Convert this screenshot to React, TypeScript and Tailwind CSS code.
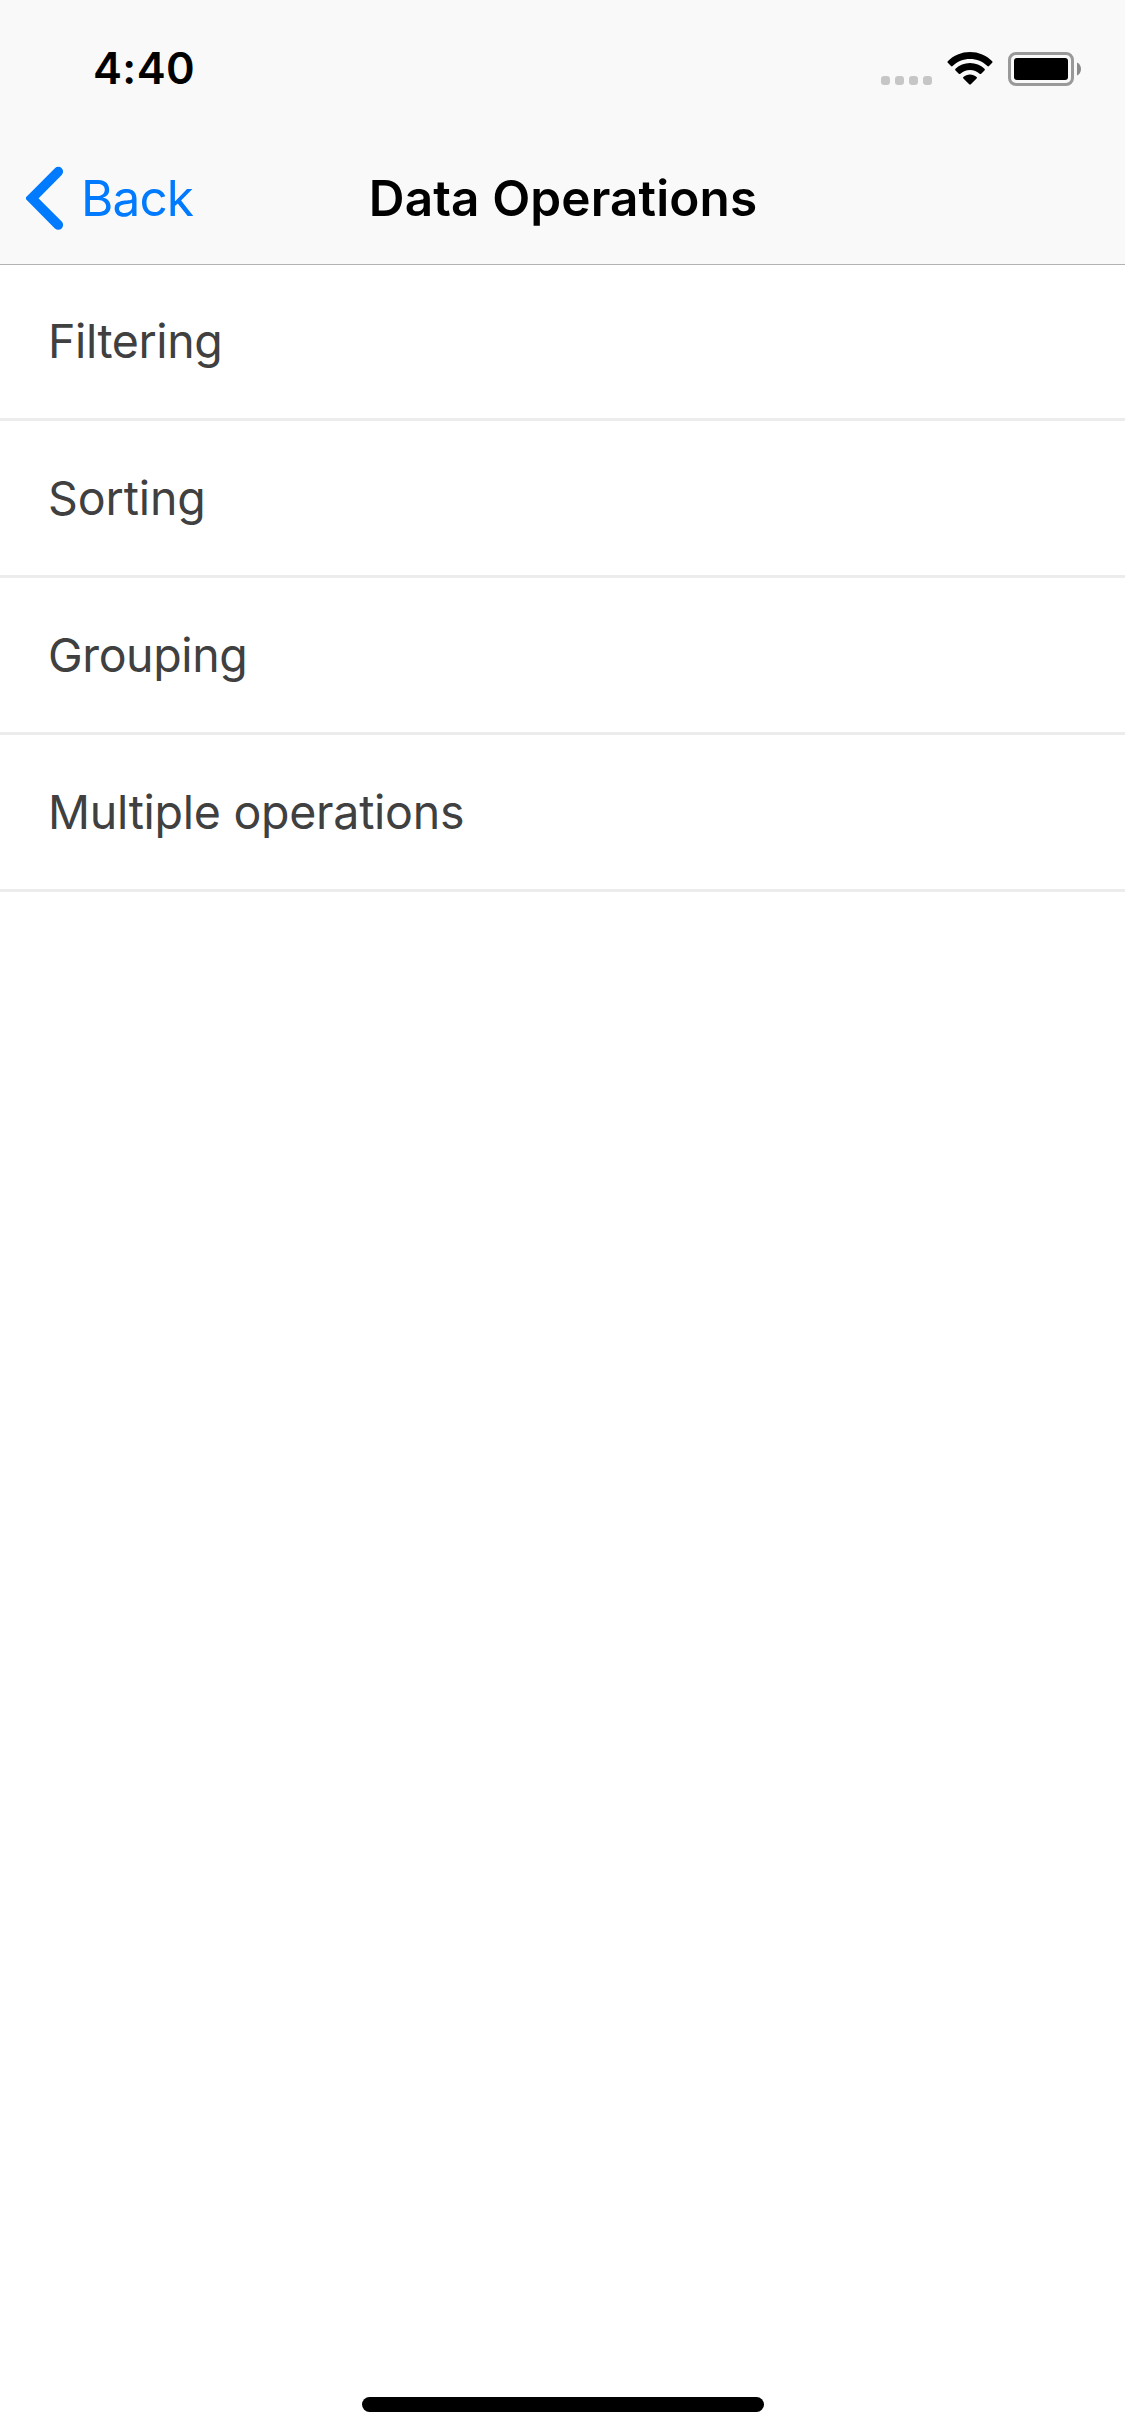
const rows = [
  { label: 'Filtering', tracking: 'tracking-[-0.4px]' },
  { label: 'Sorting', tracking: 'tracking-[-0.1px]' },
  { label: 'Grouping', tracking: 'tracking-[-0.4px]' },
  { label: 'Multiple operations', tracking: 'tracking-[-0.27px]' },
];

function StatusIcons() {
  return (
    <svg className="h-[40px] w-[202px]" viewBox="880 49 202 40">
      <g fill="#c6c6c6">
        <rect x="881" y="76" width="9" height="9" rx="3.2" />
        <rect x="895" y="76" width="9" height="9" rx="3.2" />
        <rect x="909" y="76" width="9" height="9" rx="3.2" />
        <rect x="923" y="76" width="9" height="9" rx="3.2" />
      </g>
      <path d="M970 52C978.600 52 986.500 55.400 992.200 61.200Q993 62 992.200 62.800L989 66Q988.200 66.800 987.400 66C982.800 61.600 976.700 59 970 59S957.200 61.600 952.600 66Q951.800 66.800 951 66L947.800 62.800Q947 62 947.800 61.200C953.500 55.400 961.400 52 970 52Z" />
      <path d="M970 63C975.600 63 980.700 65.200 984.500 68.800Q985.300 69.600 984.500 70.400L981.200 73.700Q980.400 74.400 979.600 73.700C977.100 71.400 973.700 70 970 70S962.900 71.400 960.400 73.700Q959.600 74.400 958.800 73.700L955.500 70.400Q954.700 69.600 955.500 68.800C959.300 65.200 964.400 63 970 63Z" />
      <path d="M970 74.500C972.500 74.500 974.800 75.400 976.600 76.900Q977.400 77.700 976.600 78.500L970.800 84.300Q970 85 969.200 84.300L963.400 78.500Q962.600 77.700 963.400 76.900C965.200 75.400 967.500 74.500 970 74.500Z" />
      <rect x="1009.500" y="53.500" width="63" height="31" rx="6.500" fill="none" stroke="#999" strokeWidth="3" />
      <rect x="1014" y="58" width="54" height="22" rx="3" />
      <path d="M1077 62.500C1079.500 63.700 1081 66 1081 69S1079.500 74.300 1077 75.500Z" fill="#8a8a8a" />
    </svg>
  );
}

export default function App() {
  return (
    <div className="flex h-[2436px] w-[1125px] flex-col bg-white font-['Inter',sans-serif]">
      <header className="flex h-[265px] flex-col border-b border-[#b2b2b2] bg-[#f9f9f9]">
        <div className="flex h-[132px] items-center justify-between pt-[6px] pr-[43px] pl-[93px]">
          <span className="text-[43.5px] leading-none font-semibold tracking-[0.4px] text-black">4:40</span>
          <StatusIcons />
        </div>
        <nav className="grid h-[132px] grid-cols-[1fr_auto_1fr] items-center text-[49.5px]">
          <button className="flex items-center pl-[26px] text-[#007aff]">
            <svg className="h-[64px] w-[38px]" viewBox="26 166 38 64">
              <path d="M58.300 171.600L31.800 198.300L58.300 225" fill="none" stroke="#007aff" strokeWidth="9.600" strokeLinecap="round" />
            </svg>
            <span className="pl-[17px] tracking-[-0.9px]">Back</span>
          </button>
          <h1 className="pl-[1px] font-semibold tracking-[0.12px] text-black">Data Operations</h1>
        </nav>
      </header>
      <main className="-mt-px flex-1 border-t border-[#b2b2b2]">
        {rows.map(({ label, tracking }, i) => (
          <div
            key={label}
            className={`flex items-center border-b-3 border-[#ececec] pl-[48px] text-[46.5px] text-[#404040] ${tracking} ${i === 0 ? 'h-[156px]' : 'h-[157px] pt-[1px]'}`}
          >
            {label}
          </div>
        ))}
      </main>
      <footer className="flex h-[39px] justify-center">
        <div className="h-[15px] w-[402px] rounded-full bg-black" />
      </footer>
    </div>
  );
}
